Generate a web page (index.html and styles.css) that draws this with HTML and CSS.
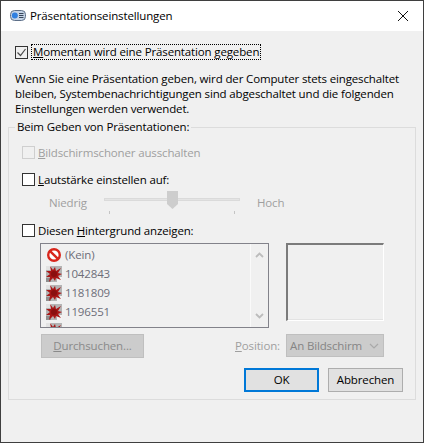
FILE: index.html
```html
<!DOCTYPE html>
<html lang="de">
<head>
    <meta charset="UTF-8">
    <title>Präsentationseinstellungen</title>
    <link rel="stylesheet" href="styles.css">
</head>
<body>
    <svg class="icon-defs" width="0" height="0">
        <symbol id="splat" viewBox="0 0 16 16">
            <rect x="0" y="0" width="16" height="16" fill="#b4b4b4"/>
            <rect x="0" y="0" width="5" height="4" fill="#e2e2e2"/>
            <rect x="0" y="12" width="5" height="4" fill="#8f8f8f"/>
            <rect x="11" y="11" width="5" height="5" fill="#f2f2f2"/>
            <path d="M4 0l3 4 2-3 1 4 5-3-3 5 4 1-4 2 3 4-5-2-1 3-2-3-4 4 1-5-4 0 4-3-4-3 5 0z" fill="#a81616"/>
            <circle cx="8" cy="8" r="3" fill="#8a0f0f"/>
        </symbol>
        <symbol id="check" viewBox="0 0 11 11">
            <path d="M1.5 5.500l3 3 5-6.500" fill="none" stroke="#4a4a4a" stroke-width="1.200"/>
        </symbol>
    </svg>

    <div class="window">
        <div class="titlebar">
            <svg class="title-icon" width="16" height="11" viewBox="0 0 16 11">
                <rect x="0.5" y="0.5" width="15" height="10" rx="4" fill="#c4d3e6" stroke="#5d6f88"/>
                <circle cx="4.800" cy="5.500" r="3" fill="#2f7fe0"/>
                <path d="M9 3.500h4.500M9 5.500h4.500M9 7.500h4.500" stroke="#39465a" stroke-width="1"/>
            </svg>
            <span class="title-text">Präsentationseinstellungen</span>
            <svg class="close-icon" width="10" height="10" viewBox="0 0 10 10">
                <path d="M0 0l10 10M10 0L0 10" stroke="#111" stroke-width="1"/>
            </svg>
        </div>

        <div class="content">
            <div class="check-row main-check">
                <span class="checkbox"><svg width="11" height="11"><use href="#check"/></svg></span>
                <span class="focus-label"><u>M</u>omentan wird eine Präsentation gegeben</span>
            </div>

            <p class="intro">Wenn Sie eine Präsentation geben, wird der Computer stets eingeschaltet<br>bleiben, Systembenachrichtigungen sind abgeschaltet und die folgenden<br>Einstellungen werden verwendet.</p>

            <fieldset class="group">
                <legend>Beim Geben von Präsentationen:</legend>

                <div class="check-row row-screensaver disabled">
                    <span class="checkbox"></span>
                    <span><u>B</u>ildschirmschoner ausschalten</span>
                </div>

                <div class="check-row row-volume">
                    <span class="checkbox"></span>
                    <span><u>L</u>autstärke einstellen auf:</span>
                </div>

                <div class="slider-row disabled">
                    <span class="slider-low">Niedrig</span>
                    <div class="slider">
                        <div class="track"></div>
                        <svg class="thumb" width="11" height="18" viewBox="0 0 11 18">
                            <path d="M0 0h11v13l-5.500 5L0 13z" fill="#cdcdcd"/>
                        </svg>
                        <span class="tick tick-left"></span>
                        <span class="tick tick-right"></span>
                    </div>
                    <span>Hoch</span>
                </div>

                <div class="check-row row-background">
                    <span class="checkbox"></span>
                    <span>Diesen <u>H</u>intergrund anzeigen:</span>
                </div>

                <div class="picker">
                    <div class="listbox">
                        <ul class="items">
                            <li>
                                <svg width="16" height="16" viewBox="0 0 16 16">
                                    <circle cx="8" cy="8" r="5.800" fill="#fff" stroke="#d8261c" stroke-width="2.400"/>
                                    <path d="M3.800 3.800l8.400 8.400" stroke="#d8261c" stroke-width="2.400"/>
                                </svg>
                                (Kein)
                            </li>
                            <li><svg width="16" height="16"><use href="#splat"/></svg>1042843</li>
                            <li><svg width="16" height="16"><use href="#splat"/></svg>1181809</li>
                            <li><svg width="16" height="16"><use href="#splat"/></svg>1196551</li>
                            <li><svg width="16" height="16"><use href="#splat"/></svg>1196877</li>
                        </ul>
                        <div class="scrollbar">
                            <svg width="9" height="6" viewBox="0 0 9 6"><path d="M1 5l3.500-3.500L8 5" fill="none" stroke="#bcbcbc" stroke-width="1.800"/></svg>
                            <svg width="9" height="6" viewBox="0 0 9 6"><path d="M1 1l3.500 3.500L8 1" fill="none" stroke="#bcbcbc" stroke-width="1.800"/></svg>
                        </div>
                    </div>
                    <div class="preview"></div>
                </div>

                <div class="browse-row">
                    <div class="browse-btn"><u>D</u>urchsuchen...</div>
                    <span class="position-label"><u>P</u>osition:</span>
                    <div class="select">
                        <span>An Bildschirm</span>
                        <svg width="10" height="6" viewBox="0 0 10 6"><path d="M1 1l4 4 4-4" fill="none" stroke="#a9a9a9" stroke-width="1.200"/></svg>
                    </div>
                </div>

                <div class="actions">
                    <div class="btn btn-default">OK</div>
                    <div class="btn">Abbrechen</div>
                </div>
            </fieldset>
        </div>
    </div>
</body>
</html>
```

FILE: styles.css
```css
* {
    box-sizing: border-box;
}
body {
    margin: 0;
    font-family: "Open Sans", sans-serif;
    font-size: 11.5px;
    letter-spacing: -0.14px;
    color: #000;
    background-color: #f0f0f0;
}
.icon-defs {
    display: block;
    height: 0;
}
.window {
    width: 424px;
    height: 443px;
    border: 1px solid #3f3f3f;
    background-color: #f0f0f0;
}
.titlebar {
    height: 30px;
    background-color: #fff;
    display: flex;
    align-items: center;
    padding: 0 15px 1px 9px;
}
.title-text {
    margin-left: 4px;
    flex: 1;
}
.content {
    padding-top: 13px;
}
.check-row {
    display: flex;
    align-items: center;
    height: 16px;
}
.checkbox {
    width: 13px;
    height: 13px;
    border: 1px solid #333;
    background-color: #fff;
    display: flex;
    align-items: center;
    justify-content: center;
    margin-right: 3px;
    flex-shrink: 0;
}
.main-check {
    margin-left: 14px;
}
.main-check .checkbox {
    background-color: #f0f0f0;
}
.focus-label {
    border: 1px dotted #000;
    height: 16px;
    line-height: 14px;
    padding: 0 1px;
}
.intro {
    margin: 11px 14px 0;
    width: 395px;
    line-height: 15px;
}
.group {
    margin: 3px 0 0 7px;
    padding: 0 0 0 13px;
    width: 408px;
    height: 281px;
    border: 1px solid #dcdcdc;
}
.group legend {
    padding: 0 2px;
    margin-left: -7px;
    line-height: 16px;
}
.disabled {
    color: #9f9f9f;
}
.disabled .checkbox {
    border-color: #cfcfcf;
    background-color: #f0f0f0;
}
.row-screensaver {
    margin-top: 9px;
}
.row-volume {
    margin-top: 11px;
}
.slider-row {
    display: flex;
    align-items: center;
    height: 24px;
    margin-top: 3px;
    padding-left: 27px;
}
.slider-low {
    width: 55px;
}
.slider {
    width: 136px;
    height: 24px;
    position: relative;
    margin-right: 17px;
}
.track {
    height: 3px;
    margin-top: 8px;
    background-color: #e4e4e4;
    border: 1px solid #dadada;
}
.thumb {
    position: absolute;
    left: 63px;
    top: 1px;
}
.tick {
    position: absolute;
    top: 21px;
    width: 1px;
    height: 3px;
    background-color: #c4c4c4;
}
.tick-left {
    left: 5px;
}
.tick-right {
    left: 130px;
}
.row-background {
    margin-top: 8px;
}
.picker {
    display: flex;
    margin: 5px 0 0 18px;
}
.listbox {
    width: 229px;
    height: 85px;
    border: 1px solid #82828a;
    display: flex;
    overflow: hidden;
}
.items {
    list-style: none;
    margin: 0;
    padding: 1px 0 0 5px;
    flex: 1;
    color: #6d6d78;
}
.items li {
    height: 19px;
    display: flex;
    align-items: center;
    gap: 3px;
}
.scrollbar {
    width: 18px;
    border-left: 1px solid #fafafa;
    display: flex;
    flex-direction: column;
    align-items: center;
    justify-content: space-between;
    padding: 8px 0;
}
.preview {
    width: 98px;
    height: 78px;
    margin-left: 17px;
    border-style: solid;
    border-width: 2px 1px 1px 2px;
    border-color: #7b7b7b #fff #fff #7b7b7b;
    box-shadow: inset 0 -1px 0 #e3e3e3;
}
.browse-row {
    display: flex;
    align-items: center;
    margin: 5px 0 0 19px;
    height: 25px;
    color: #9f9f9f;
}
.browse-btn {
    width: 103px;
    height: 24px;
    line-height: 22px;
    text-align: center;
    background-color: #ccc;
    border: 1px solid #bfbfbf;
    color: #8a8a8a;
}
.position-label {
    margin-left: 91px;
    width: 51px;
}
.select {
    width: 98px;
    height: 23px;
    background-color: #ccc;
    border: 1px solid #bfbfbf;
    color: #858585;
    display: flex;
    align-items: center;
    justify-content: space-between;
    padding: 0 4px 0 3px;
}
.actions {
    display: flex;
    justify-content: flex-end;
    gap: 9px;
    margin: 10px 12px 0 0;
}
.btn {
    width: 75px;
    height: 24px;
    line-height: 22px;
    text-align: center;
    background-color: #e1e1e1;
    border: 1px solid #adadad;
}
.btn-default {
    border: 2px solid #0078d7;
    line-height: 20px;
}
```
